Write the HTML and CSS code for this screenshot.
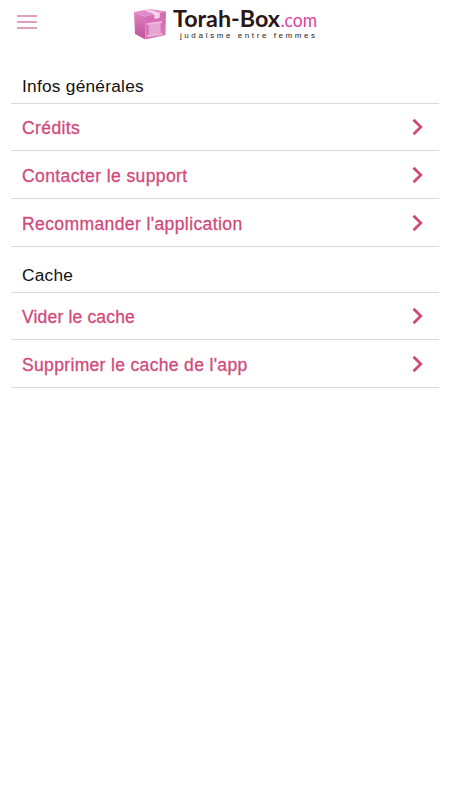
FILE: index.html
```html
<!DOCTYPE html>
<html lang="fr">
<head>
<meta charset="utf-8">
<meta name="viewport" content="width=device-width, initial-scale=1">
<title>Torah-Box.com</title>
<link rel="stylesheet" href="styles.css">
</head>
<body>
<svg class="defs" aria-hidden="true"><symbol id="chevron" viewBox="0 0 12 18"><path d="M1.500 1.700 8.800 9 1.500 16.300" fill="none" stroke="currentColor" stroke-width="2.800"/></symbol></svg>
<header class="header">
  <button class="menu" aria-label="Menu"><span></span><span></span><span></span></button>
  <svg class="logo" width="186" height="36" viewBox="0 0 186 36" role="img" aria-label="Torah-Box.com">
    <defs>
      <linearGradient id="front" x1="0" y1="0" x2="0" y2="1"><stop offset="0" stop-color="#d768b3"/><stop offset="1" stop-color="#d878b9"/></linearGradient>
      <linearGradient id="side" x1="0" y1="0" x2="0" y2="1"><stop offset="0" stop-color="#df83c0"/><stop offset="1" stop-color="#c0509c"/></linearGradient>
    </defs>
    <path d="M1 7 17 4 33 6.500 12 11.500Z" fill="#e08bc7"/>
    <path d="M1 7 12 11.500 12.500 34.500 2 29Z" fill="url(#side)"/>
    <path d="M12 11.500 33 6.500 32.500 30 12.500 34.500Z" fill="url(#front)"/>
    <path d="M11 5.200 16 4.300 27 7.900 26.500 13 21.500 14 21 9.300Z" fill="#f5d0e8"/>
    <path d="M15.500 19.500 27.500 17.500 27.500 28 16 30Z" fill="#e7a5d2"/>
    <path d="M13.500 19.200 29 17M14 31.200 29 28.800" fill="none" stroke="#edb9dc" stroke-width="1.800"/>
    <text class="brand" x="40" y="22" textLength="107" lengthAdjust="spacingAndGlyphs">Torah-Box</text>
    <text class="domain" x="147.500" y="22" textLength="36.500" lengthAdjust="spacingAndGlyphs">.com</text>
    <text class="tagline" x="47" y="33" textLength="135">judaïsme entre femmes</text>
  </svg>
</header>
<main class="settings">
  <section>
    <h2>Infos générales</h2>
    <a class="row first"><span>Crédits</span><svg><use href="#chevron"/></svg></a>
    <a class="row"><span>Contacter le support</span><svg><use href="#chevron"/></svg></a>
    <a class="row"><span>Recommander l'application</span><svg><use href="#chevron"/></svg></a>
  </section>
  <section class="cache">
    <h2>Cache</h2>
    <a class="row first"><span class="tight">Vider le cache</span><svg><use href="#chevron"/></svg></a>
    <a class="row"><span class="long">Supprimer le cache de l'app</span><svg><use href="#chevron"/></svg></a>
  </section>
</main>
</body>
</html>
```
FILE: styles.css
```css
* { box-sizing: border-box; }
body { margin: 0; min-height: 800px; background: #fff; color: #111; font-family: "Liberation Sans", sans-serif; }
.defs { position: absolute; width: 0; height: 0; }
.header { display: flex; align-items: flex-start; height: 70px; padding: 5px 0 0 17px; }
.menu { display: flex; flex-direction: column; gap: 4px; width: 20px; margin: 10px 96px 0 0; padding: 0; border: 0; background: none; }
.menu span { height: 2px; background: #e0a0bd; }
.logo { display: block; overflow: visible; }
.brand { font: 700 22px Lato, sans-serif; fill: #2c1515; }
.domain { font: 18.5px Lato, sans-serif; fill: #d9429f; }
.tagline { font: 8px "Liberation Sans", sans-serif; fill: #222; }
.settings { padding: 0 11px; }
h2 { margin: 0; height: 34px; padding: 0 11px; border-bottom: 1px solid #dadada; font-size: 17.3px; font-weight: 400; letter-spacing: .25px; line-height: 33px; }
.cache h2 { height: 46px; padding-top: 12px; }
.row { display: flex; align-items: center; justify-content: space-between; height: 48px; padding: 0 15px 0 11px; border-bottom: 1px solid #dadada; color: #d04a7c; font-size: 17.5px; letter-spacing: .4px; -webkit-text-stroke: .3px #d04a7c; }
.row span { padding-top: 2px; }
.row:not(.first) span { padding-top: 3px; }
.row .tight { letter-spacing: .17px; }
.row .long { letter-spacing: .34px; }
.row.first { height: 47px; }
.row svg { width: 12px; height: 18px; }
```
